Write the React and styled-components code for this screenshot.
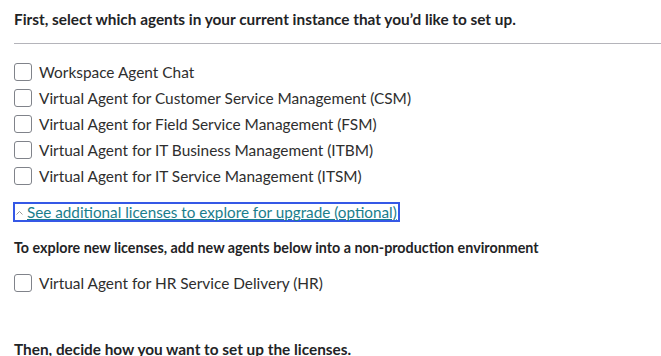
import React from 'react';
import styled, { createGlobalStyle } from 'styled-components';

const GlobalStyle = createGlobalStyle`
  body {
    margin: 0;
    background: #fff;
    font-family: Lato, "Open Sans", sans-serif;
    color: #2e2e2e;
  }
`;

const Page = styled.div`
  padding: 9px 0 0 14px;
  height: 356px;
  overflow: hidden;
  box-sizing: border-box;
`;

const Heading = styled.h2`
  margin: ${(p) => p.top || 0}px 0 0 0;
  font-size: 15.35px;
  font-weight: 700;
  line-height: 20px;
  color: #1f2426;
`;

const Divider = styled.hr`
  margin: 14px 0 0 0;
  border: none;
  border-top: 1px solid #b4b4ba;
`;

const List = styled.div`
  display: flex;
  flex-direction: column;
  gap: 8px;
  margin-top: ${(p) => p.top}px;
`;

const Row = styled.label`
  display: flex;
  align-items: center;
  gap: 7px;
  font-size: 15.4px;
  line-height: 18px;
  color: #2e2e2e;
`;

const Box = styled.span`
  width: 16px;
  height: 16px;
  border: 1px solid #80838a;
  border-radius: 3px;
  flex-shrink: 0;
`;

const Toggle = styled.a`
  display: inline-flex;
  align-items: center;
  gap: 4px;
  margin-top: 17px;
  margin-left: -1px;
  padding: 0 1px;
  height: 16px;
  border: 2px solid #3558e6;
  font-size: 15.25px;
  line-height: 16px;
  color: #1a7d8c;
  text-decoration: underline;
  cursor: pointer;
`;

const Note = styled.p`
  margin: 18px 0 0 0;
  font-size: 14.3px;
  font-weight: 700;
  line-height: 16px;
  color: #1f2426;
`;

const agents = [
  'Workspace Agent Chat',
  'Virtual Agent for Customer Service Management (CSM)',
  'Virtual Agent for Field Service Management (FSM)',
  'Virtual Agent for IT Business Management (ITBM)',
  'Virtual Agent for IT Service Management (ITSM)',
];

function Check({ label }) {
  return (
    <Row>
      <Box />
      {label}
    </Row>
  );
}

export default function App() {
  return (
    <>
      <GlobalStyle />
      <Page>
        <Heading>First, select which agents in your current instance that you’d like to set up.</Heading>
        <Divider />
        <List top={19}>
          {agents.map((a) => (
            <Check key={a} label={a} />
          ))}
        </List>
        <Toggle>
          <svg width="7" height="5" viewBox="0 0 7 5">
            <path d="M0.5 4.5 L3.5 1.5 L6.5 4.5" fill="none" stroke="#9a9a9a" strokeWidth="1" />
          </svg>
          See additional licenses to explore for upgrade (optional)
        </Toggle>
        <Note>To explore new licenses, add new agents below into a non-production environment</Note>
        <List top={18}>
          <Check label="Virtual Agent for HR Service Delivery (HR)" />
        </List>
        <Heading top={47}>Then, decide how you want to set up the licenses.</Heading>
      </Page>
    </>
  );
}
